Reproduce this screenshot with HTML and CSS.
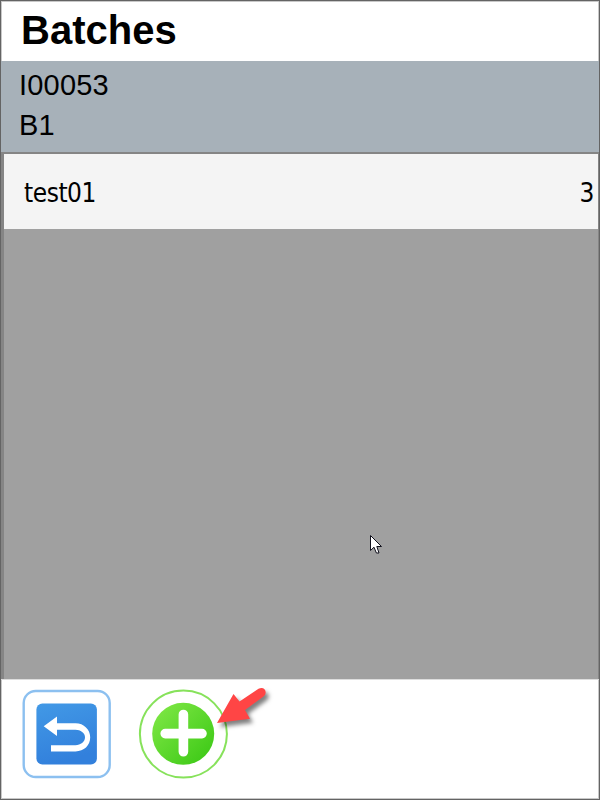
FILE: index.html
```
<!DOCTYPE html>
<html lang="en">
<head>
<meta charset="utf-8">
<title>Batches</title>
<link rel="stylesheet" href="styles.css">
</head>
<body>
<div class="window">
  <header class="title"><h1>Batches</h1></header>
  <section class="summary">
    <div>I00053</div>
    <div>B1</div>
  </section>
  <main class="list">
    <div class="row"><span>test01</span><span class="count">3</span></div>
  </main>
  <footer class="toolbar">
    <button class="tool" aria-label="Back">
      <svg width="90" height="90" viewBox="0 0 90 90">
        <defs><linearGradient id="blue" x1="0" y1="0" x2=".3" y2="1"><stop offset="0" stop-color="#4299e6"/><stop offset="1" stop-color="#3280dc"/></linearGradient></defs>
        <rect x="2.7" y="2" width="86" height="86" rx="12" fill="#fff" stroke="#8cc0f0" stroke-width="2.4"/>
        <rect x="15.4" y="14.5" width="60.5" height="61" rx="6" fill="url(#blue)"/>
        <path d="M22.7 37.2L36 27.5V34.2H54.5C63 34.2 69.2 40.5 69.2 48.3C69.2 56.5 63 62.4 54.5 62.4H30V56.2H54.5C59.5 56.2 64 52.8 64 48.3C64 44 59.5 40.8 54.5 40.8H36V47Z" fill="#fff"/>
      </svg>
    </button>
    <button class="tool add" aria-label="Add">
      <svg width="90" height="90" viewBox="0 0 90 90">
        <defs><linearGradient id="green" x1="0" y1="0" x2="1" y2="1"><stop offset=".15" stop-color="#78e440"/><stop offset=".9" stop-color="#3fca18"/></linearGradient></defs>
        <circle cx="45.4" cy="45.1" r="43.5" fill="#fff" stroke="#87e25b" stroke-width="2"/>
        <circle cx="45.2" cy="44.8" r="31" fill="url(#green)"/>
        <path d="M45.4 25.5V62.8M27.2 44.6H64" stroke="#fff" stroke-width="9.6" stroke-linecap="round"/>
      </svg>
    </button>
  </footer>
  <svg class="pointer" width="66" height="56" viewBox="0 0 66 56">
    <path d="M7 43L23.5 14L29.5 21.5L48.5 8.8C54 5.5 58.5 12 53.5 16.5L35 30L40 38.8Z" fill="#ff4545"/>
  </svg>
  <svg class="cursor" width="14" height="22" viewBox="0 0 14 22">
    <path d="M1.5 1.5V16.5L5 13.2L7.4 19H10L7.8 12.5H12.5Z" fill="#fff" stroke="#10101c" stroke-width="1"/>
  </svg>
</div>
</body>
</html>
```
FILE: styles.css
```
* { box-sizing: border-box; }
body { margin: 0; font-family: "Liberation Sans", Arial, sans-serif; color: #000; }
.window {
  position: relative;
  display: flex;
  flex-direction: column;
  width: 600px;
  height: 800px;
  border: 1px solid #646464;
  background: #fff;
  box-shadow: inset 0 0 0 1px #c8c8c8;
}
.title { height: 60px; padding: 7px 0 0 20px; }
h1 { margin: 0; font-size: 40px; line-height: 44px; font-weight: 700; }
.summary {
  height: 91px;
  padding: 4px 0 0 18px;
  background: #a7b1b9;
  font-size: 29px;
  line-height: 40px;
  letter-spacing: .2px;
}
.list {
  height: 527px;
  border: solid #858585;
  border-width: 2px 1px 0 3px;
  background: #a0a0a0;
}
.row {
  display: flex;
  justify-content: space-between;
  align-items: center;
  height: 75px;
  padding: 2px 4px 0 20px;
  background: #f4f4f4;
  font: 26px "DejaVu Sans Condensed", "DejaVu Sans", sans-serif;
  font-stretch: condensed;
  letter-spacing: -.45px;
}
.toolbar {
  display: flex;
  gap: 27px;
  flex: 1;
  padding: 9px 0 0 20px;
  border-top: 1px solid #ddd;
}
.tool { width: 90px; height: 90px; padding: 0; border: 0; background: none; }
.tool svg { display: block; }
.pointer {
  position: absolute;
  left: 209px;
  top: 679px;
  filter: drop-shadow(3px 4px 2px rgba(0, 0, 0, .5));
}
.cursor { position: absolute; left: 368px; top: 533px; }
```
